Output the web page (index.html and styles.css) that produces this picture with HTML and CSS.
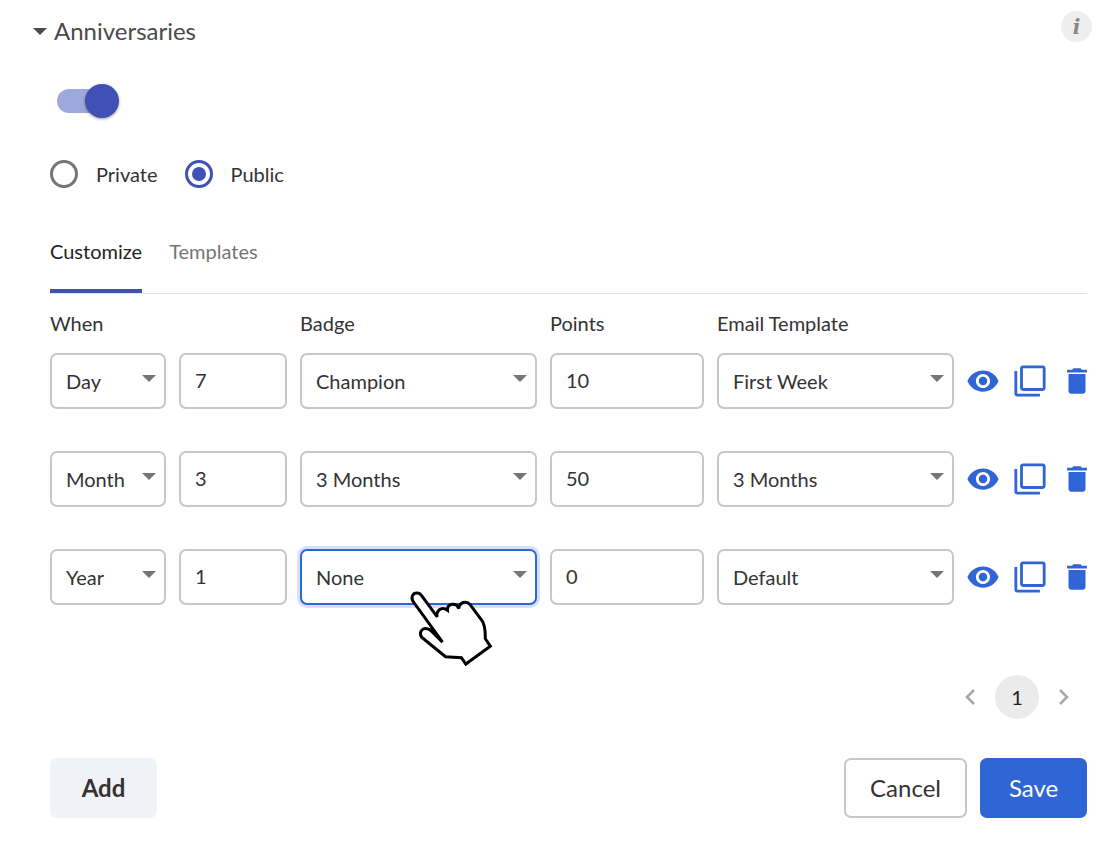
FILE: index.html
```html
<!DOCTYPE html>
<html lang="en">
<head>
  <meta charset="UTF-8" />
  <meta name="viewport" content="width=device-width, initial-scale=1.0" />
  <title>Anniversaries</title>
  <link rel="stylesheet" href="styles.css">
</head>
<body>

  <!-- Shared icons -->
  <svg class="sprite" aria-hidden="true">
    <symbol id="icon-eye" viewBox="0 0 24 24">
      <path d="M12 4.5C7 4.5 2.73 7.61 1 12c1.73 4.39 6 7.5 11 7.5s9.27-3.11 11-7.5c-1.73-4.39-6-7.5-11-7.5zM12 17c-2.76 0-5-2.24-5-5s2.24-5 5-5 5 2.24 5 5-2.24 5-5 5zm0-8c-1.66 0-3 1.34-3 3s1.34 3 3 3 3-1.34 3-3-1.34-3-3-3z" />
    </symbol>
    <symbol id="icon-copy" viewBox="0 0 24 24">
      <path d="M3 5H1v16c0 1.1.9 2 2 2h16v-2H3V5zm18-4H7c-1.1 0-2 .9-2 2v14c0 1.1.9 2 2 2h14c1.1 0 2-.9 2-2V3c0-1.1-.9-2-2-2zm0 16H7V3h14v14z" />
    </symbol>
    <symbol id="icon-trash" viewBox="0 0 24 24">
      <path d="M6 19c0 1.1.9 2 2 2h8c1.1 0 2-.9 2-2V7H6v12zM19 4h-3.500l-1-1h-5l-1 1H5v2h14V4z" />
    </symbol>
  </svg>

  <header class="panel-header">
    <button class="panel-toggle" type="button" aria-expanded="true">
      <span class="caret"></span>
      Anniversaries
    </button>
    <button class="info" type="button" aria-label="Info">i</button>
  </header>

  <main class="panel">
    <input class="switch" type="checkbox" aria-label="Enable anniversaries" checked>

    <div class="radios">
      <label class="radio"><input type="radio" name="visibility">Private</label>
      <label class="radio"><input type="radio" name="visibility" checked>Public</label>
    </div>

    <div class="tabs" role="tablist">
      <button class="tab active" type="button" role="tab" aria-selected="true">Customize</button>
      <button class="tab" type="button" role="tab" aria-selected="false">Templates</button>
    </div>

    <table class="rules">
      <colgroup>
        <col class="col-unit">
        <col class="col-count">
        <col>
        <col class="col-points">
        <col>
        <col class="col-actions">
      </colgroup>
      <thead>
        <tr>
          <th colspan="2">When</th>
          <th>Badge</th>
          <th>Points</th>
          <th>Email Template</th>
          <td></td>
        </tr>
      </thead>
      <tbody>
        <tr>
          <td><div class="select"><select aria-label="Unit"><option>Day</option></select></div></td>
          <td><input class="text" type="text" aria-label="Count" value="7"></td>
          <td><div class="select"><select aria-label="Badge"><option>Champion</option></select></div></td>
          <td><input class="text" type="text" aria-label="Points" value="10"></td>
          <td><div class="select"><select aria-label="Email template"><option>First Week</option></select></div></td>
          <td>
            <div class="actions">
              <button type="button" aria-label="Preview"><svg><use href="#icon-eye" /></svg></button>
              <button type="button" aria-label="Duplicate"><svg><use href="#icon-copy" /></svg></button>
              <button type="button" aria-label="Delete"><svg><use href="#icon-trash" /></svg></button>
            </div>
          </td>
        </tr>
        <tr>
          <td><div class="select"><select aria-label="Unit"><option>Month</option></select></div></td>
          <td><input class="text" type="text" aria-label="Count" value="3"></td>
          <td><div class="select"><select aria-label="Badge"><option>3 Months</option></select></div></td>
          <td><input class="text" type="text" aria-label="Points" value="50"></td>
          <td><div class="select"><select aria-label="Email template"><option>3 Months</option></select></div></td>
          <td>
            <div class="actions">
              <button type="button" aria-label="Preview"><svg><use href="#icon-eye" /></svg></button>
              <button type="button" aria-label="Duplicate"><svg><use href="#icon-copy" /></svg></button>
              <button type="button" aria-label="Delete"><svg><use href="#icon-trash" /></svg></button>
            </div>
          </td>
        </tr>
        <tr>
          <td><div class="select"><select aria-label="Unit"><option>Year</option></select></div></td>
          <td><input class="text" type="text" aria-label="Count" value="1"></td>
          <td>
            <div class="select focused">
              <select aria-label="Badge"><option>None</option></select>
              <svg class="pointer" viewBox="90 180 250 230" aria-hidden="true">
                <path d="M188 336L99 213C92 200 99 189 109 188C116 187 121 190 125 196L172 260C167 243 184 226 203 240C202 219 229 215 237 235C239 215 260 210 271 223L308 273C318 289 316 308 317 326L332 348L258 402L245 383L197 380L125 321C116 307 126 292 142 296C149 297 153 301 157 305Z" />
              </svg>
            </div>
          </td>
          <td><input class="text" type="text" aria-label="Points" value="0"></td>
          <td><div class="select"><select aria-label="Email template"><option>Default</option></select></div></td>
          <td>
            <div class="actions">
              <button type="button" aria-label="Preview"><svg><use href="#icon-eye" /></svg></button>
              <button type="button" aria-label="Duplicate"><svg><use href="#icon-copy" /></svg></button>
              <button type="button" aria-label="Delete"><svg><use href="#icon-trash" /></svg></button>
            </div>
          </td>
        </tr>
      </tbody>
    </table>

    <nav class="pagination" aria-label="Pages">
      <button type="button" aria-label="Previous"><svg viewBox="0 0 10 16"><path d="M9 1L2 8L9 15" /></svg></button>
      <button class="current" type="button">1</button>
      <button type="button" aria-label="Next"><svg viewBox="0 0 10 16"><path d="M1 1L8 8L1 15" /></svg></button>
    </nav>

    <div class="footer">
      <button class="btn add" type="button">Add</button>
      <button class="btn cancel" type="button">Cancel</button>
      <button class="btn save" type="button">Save</button>
    </div>
  </main>

</body>
</html>
```

FILE: styles.css
```css
*, *::before, *::after {
  box-sizing: border-box;
}

:root {
  --color-text: #333333;
  --color-muted: #757575;
  --color-border: #c8c8c8;
  --color-blue: #2f65d4;
  --color-indigo: #3f51b5;
}

body {
  margin: 0;
  font-family: Lato, sans-serif;
  font-size: 20px;
  line-height: 24px;
  color: var(--color-text);
  background-color: #ffffff;
}

button, input, select {
  margin: 0;
  font: inherit;
  color: inherit;
}

button {
  padding: 0;
  border: none;
  background: none;
  cursor: pointer;
}

.sprite {
  display: none;
}

/* Header */
.panel-header {
  display: flex;
  justify-content: space-between;
  align-items: flex-start;
  padding: 11px 20px 0 33px;
}

.panel-toggle {
  display: flex;
  align-items: center;
  gap: 7px;
  height: 40px;
  font-size: 24px;
  color: #4a4a4a;
}

.caret {
  border: 7px solid transparent;
  border-top-color: #4a4a4a;
  border-bottom: none;
}

.info {
  width: 31px;
  height: 31px;
  border-radius: 50%;
  background-color: #eeeeee;
  color: #888888;
  font-family: "DejaVu Serif", serif;
  font-size: 20px;
  font-style: italic;
  font-weight: 700;
}

.panel {
  padding: 33px 25px 32px 50px;
}

/* Switch */
.switch {
  display: block;
  position: relative;
  width: 62px;
  height: 34px;
  margin-left: 7px;
  appearance: none;
}

.switch::before {
  content: "";
  position: absolute;
  top: 5px;
  left: 0;
  width: 56px;
  height: 24px;
  border-radius: 12px;
  background-color: #9fa8da;
}

.switch::after {
  content: "";
  position: absolute;
  top: 0;
  right: 0;
  width: 34px;
  height: 34px;
  border-radius: 50%;
  background-color: var(--color-indigo);
  box-shadow: 0 1px 3px rgba(0, 0, 0, 0.4);
}

/* Radios */
.radios {
  display: flex;
  gap: 27px;
  margin-top: 42px;
}

.radio {
  display: flex;
  align-items: center;
  gap: 18px;
}

.radio input {
  display: grid;
  place-items: center;
  width: 28px;
  height: 28px;
  border: 3px solid var(--color-muted);
  border-radius: 50%;
  appearance: none;
}

.radio input:checked {
  border-color: var(--color-indigo);
}

.radio input:checked::before {
  content: "";
  width: 14px;
  height: 14px;
  border-radius: 50%;
  background-color: var(--color-indigo);
}

/* Tabs */
.tabs {
  display: flex;
  gap: 27px;
  margin-top: 26px;
  border-bottom: 1px solid #e3e3e3;
}

.tab {
  height: 79px;
  padding-bottom: 1px;
  border-bottom: 4px solid transparent;
  color: var(--color-muted);
}

.tab.active {
  border-bottom-color: var(--color-indigo);
  color: #222222;
}

/* Rules table */
.rules {
  width: 100%;
  table-layout: fixed;
  border-collapse: collapse;
}

.col-unit {
  width: 129px;
}

.col-count {
  width: 121px;
}

.col-points {
  width: 167px;
}

.col-actions {
  width: 120px;
}

.rules th {
  padding: 17px 0 18px;
  font-weight: 400;
  text-align: left;
}

.rules td {
  padding: 0 13px 42px 0;
}

.rules thead td {
  padding: 0;
}

.rules td:last-child {
  padding-right: 0;
}

.select {
  position: relative;
}

.select::after {
  content: "";
  position: absolute;
  top: 22px;
  right: 10px;
  border: 7px solid transparent;
  border-top-color: var(--color-muted);
  border-bottom: none;
  pointer-events: none;
}

.select select, .text {
  display: block;
  width: 100%;
  height: 56px;
  padding: 0 14px;
  border: 2px solid var(--color-border);
  border-radius: 7px;
  background-color: #ffffff;
  appearance: none;
}

.text {
  padding-bottom: 2px;
}

.focused select {
  border-color: var(--color-blue);
  box-shadow: 0 0 0 3px #d6e0f7;
}

.pointer {
  position: absolute;
  top: 41px;
  left: 110px;
  z-index: 1;
  width: 83px;
  height: 77px;
  fill: #ffffff;
  stroke: #000000;
  stroke-width: 9;
  pointer-events: none;
}

.actions {
  display: flex;
  gap: 13px;
  margin: 0 -8px 0 -1px;
}

.actions button {
  width: 34px;
  height: 34px;
}

.actions svg {
  display: block;
  width: 34px;
  height: 34px;
  fill: var(--color-blue);
}

/* Pagination */
.pagination {
  display: flex;
  justify-content: flex-end;
  gap: 3px;
  margin-top: 28px;
  padding-right: 1px;
}

.pagination button {
  width: 44px;
  height: 44px;
  border-radius: 50%;
}

.pagination .current {
  background-color: #ebebeb;
  color: #222222;
}

.pagination svg {
  display: block;
  width: 10px;
  height: 16px;
  margin: 0 auto;
  fill: none;
  stroke: #a6a6a6;
  stroke-width: 2.500;
}

/* Footer buttons */
.footer {
  display: flex;
  gap: 13px;
  margin-top: 39px;
}

.btn {
  min-width: 107px;
  height: 60px;
  padding: 0 24px;
  border-radius: 7px;
  font-size: 24px;
}

.add {
  margin-right: auto;
  background-color: #f1f2f8;
  font-weight: 700;
}

.cancel {
  border: 2px solid var(--color-border);
}

.save {
  background-color: var(--color-blue);
  color: #ffffff;
}
```
